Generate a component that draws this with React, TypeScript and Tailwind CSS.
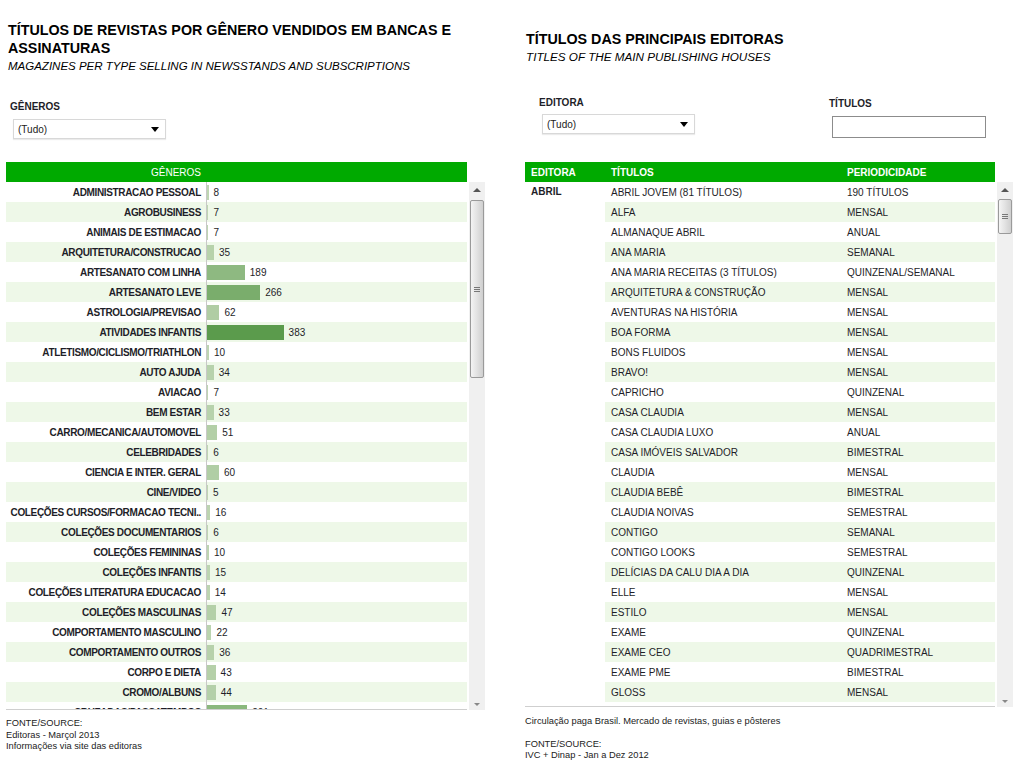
import React from 'react';

const generos: [string, number][] = [
  ['ADMINISTRACAO PESSOAL', 8],
  ['AGROBUSINESS', 7],
  ['ANIMAIS DE ESTIMACAO', 7],
  ['ARQUITETURA/CONSTRUCAO', 35],
  ['ARTESANATO COM LINHA', 189],
  ['ARTESANATO LEVE', 266],
  ['ASTROLOGIA/PREVISAO', 62],
  ['ATIVIDADES INFANTIS', 383],
  ['ATLETISMO/CICLISMO/TRIATHLON', 10],
  ['AUTO AJUDA', 34],
  ['AVIACAO', 7],
  ['BEM ESTAR', 33],
  ['CARRO/MECANICA/AUTOMOVEL', 51],
  ['CELEBRIDADES', 6],
  ['CIENCIA E INTER. GERAL', 60],
  ['CINE/VIDEO', 5],
  ['COLEÇÕES CURSOS/FORMACAO TECNI..', 16],
  ['COLEÇÕES DOCUMENTARIOS', 6],
  ['COLEÇÕES FEMININAS', 10],
  ['COLEÇÕES INFANTIS', 15],
  ['COLEÇÕES LITERATURA EDUCACAO', 14],
  ['COLEÇÕES MASCULINAS', 47],
  ['COMPORTAMENTO MASCULINO', 22],
  ['COMPORTAMENTO OUTROS', 36],
  ['CORPO E DIETA', 43],
  ['CROMO/ALBUNS', 44],
  ['CRUZADAS/PASSATEMPOS', 201],
];

const titulos: [string, string][] = [
  ['ABRIL JOVEM (81 TÍTULOS)', '190 TÍTULOS'],
  ['ALFA', 'MENSAL'],
  ['ALMANAQUE ABRIL', 'ANUAL'],
  ['ANA MARIA', 'SEMANAL'],
  ['ANA MARIA RECEITAS (3 TÍTULOS)', 'QUINZENAL/SEMANAL'],
  ['ARQUITETURA & CONSTRUÇÃO', 'MENSAL'],
  ['AVENTURAS NA HISTÓRIA', 'MENSAL'],
  ['BOA FORMA', 'MENSAL'],
  ['BONS FLUIDOS', 'MENSAL'],
  ['BRAVO!', 'MENSAL'],
  ['CAPRICHO', 'QUINZENAL'],
  ['CASA CLAUDIA', 'MENSAL'],
  ['CASA CLAUDIA LUXO', 'ANUAL'],
  ['CASA IMÓVEIS SALVADOR', 'BIMESTRAL'],
  ['CLAUDIA', 'MENSAL'],
  ['CLAUDIA BEBÊ', 'BIMESTRAL'],
  ['CLAUDIA NOIVAS', 'SEMESTRAL'],
  ['CONTIGO', 'SEMANAL'],
  ['CONTIGO LOOKS', 'SEMESTRAL'],
  ['DELÍCIAS DA CALU DIA A DIA', 'QUINZENAL'],
  ['ELLE', 'MENSAL'],
  ['ESTILO', 'MENSAL'],
  ['EXAME', 'QUINZENAL'],
  ['EXAME CEO', 'QUADRIMESTRAL'],
  ['EXAME PME', 'BIMESTRAL'],
  ['GLOSS', 'MENSAL'],
  ['GOOUTSIDE', 'ESPECIAL'],
];

// tableau-ish sequential green
const barColor = (v: number) => {
  const t = Math.min(v / 383, 1);
  const a = [0xc0, 0xd7, 0xb5];
  const b = [0x5b, 0x9b, 0x4c];
  const c = a.map((x, i) => Math.round(x + (b[i] - x) * t));
  return `rgb(${c[0]},${c[1]},${c[2]})`;
};

const Dropdown = () => (
  <div className="w-[153px] h-[20px] bg-white border border-[#d8d8d8] shadow-[0_1px_1px_rgba(0,0,0,0.08)] flex items-center justify-between pl-[4px] pr-[6px] text-[10px] text-[#222]">
    <span>(Tudo)</span>
    <span className="w-0 h-0 border-l-[4px] border-r-[4px] border-t-[5px] border-l-transparent border-r-transparent border-t-black" />
  </div>
);

const Scrollbar = ({ thumb }: { thumb: string }) => (
  <div className="w-[16px] h-full bg-[#f0f0f0] flex flex-col">
    <div className="h-[16px] flex items-center justify-center">
      <span className="w-0 h-0 border-l-[4px] border-r-[4px] border-b-[4px] border-l-transparent border-r-transparent border-b-[#555]" />
    </div>
    <div className="flex-1">
      <div className={`mx-auto w-[14px] rounded-[2px] border border-[#9a9a9a] bg-gradient-to-r from-[#f4f4f4] via-[#e2e2e2] to-[#cfcfcf] flex flex-col items-center justify-center gap-[1px] ${thumb}`}>
        <span className="w-[6px] h-[1px] bg-[#777]" />
        <span className="w-[6px] h-[1px] bg-[#777]" />
        <span className="w-[6px] h-[1px] bg-[#777]" />
      </div>
    </div>
    <div className="h-[12px] flex items-center justify-center">
      <span className="w-0 h-0 border-l-[3px] border-r-[3px] border-t-[3px] border-l-transparent border-r-transparent border-t-[#888]" />
    </div>
  </div>
);

export default function App() {
  return (
    <div className="w-[1024px] h-[768px] bg-white flex text-[#1e1e28] font-['Liberation_Sans',sans-serif] overflow-hidden">
      {/* left panel */}
      <div className="w-[520px] pl-[6px] pt-[21px] flex flex-col">
        <div className="pl-[2px]">
          <h1 className="text-[14.3px] leading-[18px] font-bold text-black">
            TÍTULOS DE REVISTAS POR GÊNERO VENDIDOS EM BANCAS E<br />ASSINATURAS
          </h1>
          <div className="mt-[2px] text-[11.5px] leading-[15px] italic text-black">MAGAZINES PER TYPE SELLING IN NEWSSTANDS AND SUBSCRIPTIONS</div>
        </div>
        <div className="pl-[4px] mt-[27px] text-[10px] leading-[12px] font-bold">GÊNEROS</div>
        <div className="pl-[7px] mt-[6px]">
          <Dropdown />
        </div>
        <div className="mt-[23px] w-[461px] h-[20px] bg-[#00aa00] flex items-center">
          <div className="w-[195px] text-right text-white text-[10px]">GÊNEROS</div>
        </div>
        <div className="flex h-[528px] gap-[2px]">
          <div className="w-[461px] h-full overflow-hidden border-b border-[#cfcfcf] relative">
            <div className="absolute left-[200px] top-0 bottom-0 w-px bg-[#c8c8c8]" />
            {generos.map(([g, v], i) => (
              <div key={g} className={`h-[20px] flex items-center text-[10px] ${i % 2 ? 'bg-[#eef8e8]' : 'bg-white'}`}>
                <div className="w-[195px] flex justify-end">
                  <span className="font-bold whitespace-nowrap tracking-[-0.35px]">{g}</span>
                </div>
                <div className="ml-[6px] h-[15px] mt-[1px]" style={{ width: v * 0.2, backgroundColor: barColor(v) }} />
                <div className="ml-[5px]">{v}</div>
              </div>
            ))}
          </div>
          <Scrollbar thumb="mt-[2px] h-[178px]" />
        </div>
        <div className="mt-[8px] text-[9.3px] leading-[11.5px] text-[#222]">
          <div>FONTE/SOURCE:</div>
          <div>Editoras - Marçol 2013</div>
          <div>Informações via site das editoras</div>
        </div>
      </div>

      {/* right panel */}
      <div className="flex-1 pl-[5px] pt-[30px] flex flex-col">
        <div className="pl-[1px]">
          <h2 className="text-[14.3px] leading-[18px] font-bold text-black">TÍTULOS DAS PRINCIPAIS EDITORAS</h2>
          <div className="mt-[1px] text-[11.7px] leading-[15px] italic text-black">TITLES OF THE MAIN PUBLISHING HOUSES</div>
        </div>
        <div className="flex mt-[33px] h-[42px]">
          <div className="w-[290px] pl-[14px]">
            <div className="text-[10px] leading-[12px] font-bold">EDITORA</div>
            <div className="pl-[3px] mt-[5px]">
              <Dropdown />
            </div>
          </div>
          <div className="pl-[14px]">
            <div className="text-[10px] leading-[12px] font-bold mt-[1px]">TÍTULOS</div>
            <div className="ml-[3px] mt-[6px] w-[154px] h-[22px] border border-[#8c8c8c] bg-white" />
          </div>
        </div>
        <div className="mt-[23px] w-[470px] h-[20px] bg-[#00aa00] flex items-center text-white text-[10px] font-bold">
          <div className="w-[80px] pl-[6px]">EDITORA</div>
          <div className="w-[236px] pl-[6px]">TÍTULOS</div>
          <div className="pl-[6px]">PERIODICIDADE</div>
        </div>
        <div className="flex h-[525px] gap-[2px]">
          <div className="w-[470px] h-full overflow-hidden border-b border-[#cfcfcf] flex">
            <div className="w-[80px] pl-[6px] pt-[2px] text-[10px] font-bold">ABRIL</div>
            <div className="flex-1">
              {titulos.map(([t, p], i) => (
                <div key={t} className={`h-[20px] flex items-center text-[10px] ${i % 2 ? 'bg-[#eef8e8]' : 'bg-white'}`}>
                  <div className="w-[236px] pl-[6px] whitespace-nowrap">{t}</div>
                  <div className="pl-[6px] whitespace-nowrap">{p}</div>
                </div>
              ))}
            </div>
          </div>
          <Scrollbar thumb="mt-[1px] h-[35px]" />
        </div>
        <div className="mt-[9px] text-[9.3px] leading-[11.5px] text-[#222]">
          <div>Circulação paga Brasil. Mercado de revistas, guias e pôsteres</div>
          <div className="mt-[11px]">FONTE/SOURCE:</div>
          <div>IVC + Dinap - Jan a Dez 2012</div>
        </div>
      </div>
    </div>
  );
}
